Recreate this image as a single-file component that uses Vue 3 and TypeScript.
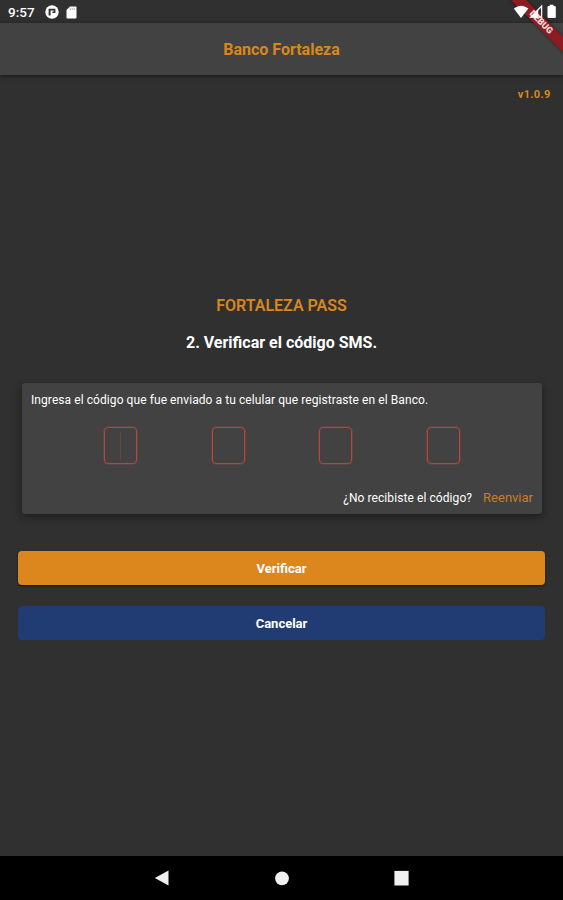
<script setup lang="ts">
import { ref } from 'vue'

const version = 'v1.0.9'
const digits = ref<string[]>(['', '', '', ''])
const focused = ref(0)
</script>

<template>
  <div class="screen">
    <header class="status">
      <span class="clock">9:57</span>
      <svg class="notif" viewBox="0 0 14 14" width="14" height="14">
        <circle cx="7" cy="7" r="6.7" fill="#fff" />
        <path d="M3.6 3.8H10.4V8H7.4V6.4H8.8V5.4H5.6V10.6H3.6Z" fill="#303030" />
      </svg>
      <svg class="sd" viewBox="0 0 11 13" width="11" height="13">
        <path d="M4 .5H9.5Q10.5.5 10.5 1.5V11.5Q10.5 12.5 9.5 12.5H1.5Q.5 12.5.5 11.5V4Z" fill="#fff" />
        <path d="M4.2 2.2V4M6.2 2.2V4M8.2 2.2V4" stroke="#8a8a8a" stroke-width=".7" />
      </svg>
      <svg class="system" viewBox="0 0 44 16" width="44" height="16">
        <path d="M.8 4.6Q8-1.2 15.4 4.6L8 14Z" fill="#fff" />
        <path d="M28.6 2V13.2H17.8Z" fill="none" stroke="#fff" stroke-width="1.3" />
        <path d="M25.2 5.6V13.2H17.8Z" fill="#fff" />
        <path d="M35.6 1.9H36.8V.7H40.5V1.9H41.7Q42.8 1.9 42.8 3V13Q42.8 14.1 41.7 14.1H35.6Q34.5 14.1 34.5 13V3Q34.5 1.9 35.6 1.9Z" fill="#fff" />
      </svg>
    </header>
    <div class="corner"><span class="ribbon">DEBUG</span></div>

    <div class="appbar"><h1>Banco Fortaleza</h1></div>

    <main>
      <p class="version">{{ version }}</p>
      <h2 class="brand">FORTALEZA PASS</h2>
      <h3 class="step">2. Verificar el código SMS.</h3>

      <section class="card">
        <p class="hint">Ingresa el código que fue enviado a tu celular que registraste en el Banco.</p>
        <div class="pins">
          <div v-for="(digit, i) in digits" :key="i" class="pin" @click="focused = i">
            {{ digit }}<span v-if="i === focused" class="caret"></span>
          </div>
        </div>
        <div class="resend">
          <span class="ask">¿No recibiste el código?</span>
          <a class="link">Reenviar</a>
        </div>
      </section>

      <div class="actions">
        <button class="btn verify"><span>Verificar</span></button>
        <button class="btn cancel"><span>Cancelar</span></button>
      </div>
    </main>

    <nav class="navbar">
      <svg viewBox="0 0 16 16" width="16" height="16"><path d="M.8 8L14.5.6V15.4Z" fill="#f0f0f0" /></svg>
      <svg viewBox="0 0 16 16" width="16" height="16"><circle cx="8" cy="8.3" r="6.9" fill="#f0f0f0" /></svg>
      <svg viewBox="0 0 16 16" width="16" height="16"><rect x=".4" y=".9" width="14.2" height="14.6" fill="#f0f0f0" /></svg>
    </nav>
  </div>
</template>

<style>
body {
  margin: 0;
  background: #303030;
}
</style>

<style scoped>
.screen {
  position: relative;
  display: flex;
  flex-direction: column;
  width: 563px;
  height: 900px;
  overflow: hidden;
  background: #303030;
  color: #fff;
  font-family: Roboto, sans-serif;
}
h1, h2, h3, p {
  margin: 0;
}
.status {
  display: flex;
  align-items: center;
  height: 23px;
  flex: none;
  padding: 0 6px 0 8px;
  box-sizing: border-box;
}
.clock {
  width: 36.5px;
  font-size: 13.5px;
  line-height: 20px;
  font-weight: 500;
}
.notif {
  margin-top: 1px;
}
.sd {
  margin: 1px 0 0 7.5px;
}
.system {
  position: relative;
  z-index: 3;
  margin-left: auto;
}
.corner {
  position: absolute;
  z-index: 2;
  top: 0;
  right: 0;
  width: 60px;
  height: 60px;
  overflow: hidden;
}
.ribbon {
  position: absolute;
  top: 17px;
  left: -12px;
  width: 100px;
  height: 11px;
  transform: rotate(45deg);
  background: #8c1b22;
  box-shadow: 0 0 3px rgba(0, 0, 0, 0.5);
  color: #f3dede;
  font-size: 9px;
  line-height: 11px;
  font-weight: 900;
  text-align: center;
}
.appbar {
  position: relative;
  z-index: 1;
  display: flex;
  align-items: center;
  justify-content: center;
  height: 52px;
  flex: none;
  background: #424242;
  box-shadow: 0 1px 4px rgba(0, 0, 0, 0.55);
}
h1 {
  padding-top: 2px;
  font-size: 16px;
  line-height: 20px;
  font-weight: 700;
  color: #d8871f;
}
main {
  display: flex;
  flex: 1;
  flex-direction: column;
}
.version {
  margin: 12px 12.5px 0 0;
  font-size: 11px;
  line-height: 16px;
  font-weight: 700;
  letter-spacing: 0.3px;
  text-align: right;
  color: #d8871f;
}
.brand {
  margin-top: 193px;
  font-size: 16px;
  line-height: 20px;
  font-weight: 600;
  text-align: center;
  color: #d8871f;
}
.step {
  margin-top: 17px;
  font-size: 16px;
  line-height: 20px;
  font-weight: 700;
  text-align: center;
}
.card {
  display: flex;
  flex-direction: column;
  box-sizing: border-box;
  height: 131px;
  margin: 30px 21px 0 22px;
  padding: 8px 9px 8px 9px;
  border-radius: 3px;
  background: #424242;
  box-shadow: 0 3px 8px rgba(0, 0, 0, 0.4);
}
.hint {
  padding-top: 1px;
  font-size: 12px;
  line-height: 16px;
  font-weight: 400;
  letter-spacing: 0.075px;
  white-space: nowrap;
}
.pins {
  display: flex;
  justify-content: space-between;
  margin: 19px 73px 0 73px;
}
.pin {
  display: flex;
  align-items: center;
  justify-content: center;
  box-sizing: border-box;
  width: 33px;
  height: 37px;
  border: 1px solid #b9453e;
  border-radius: 4px;
  box-shadow: 0 0 0 0.5px rgba(194, 71, 63, 0.5);
}
.caret {
  width: 1px;
  height: 28px;
  background: #65483b;
}
.resend {
  display: flex;
  align-items: center;
  justify-content: flex-end;
  gap: 11px;
  margin-top: auto;
  line-height: 16px;
}
.ask {
  font-size: 12px;
  letter-spacing: 0.08px;
}
.link {
  font-size: 13px;
  color: #c97f24;
}
.actions {
  display: flex;
  flex-direction: column;
  gap: 21px;
  margin: 37px 18px 0;
}
.btn {
  height: 34px;
  padding: 1px 0 0;
  border: 0;
  border-radius: 4px;
  color: #fff;
  font: 700 13px/33px Roboto, sans-serif;
}
.verify {
  background: #dc871d;
  box-shadow: 0 1px 2px rgba(0, 10, 20, 0.7);
}
.cancel {
  background: #203c72;
}
.navbar {
  display: flex;
  align-items: center;
  justify-content: center;
  gap: 104px;
  height: 44px;
  flex: none;
  background: #000;
}
</style>
